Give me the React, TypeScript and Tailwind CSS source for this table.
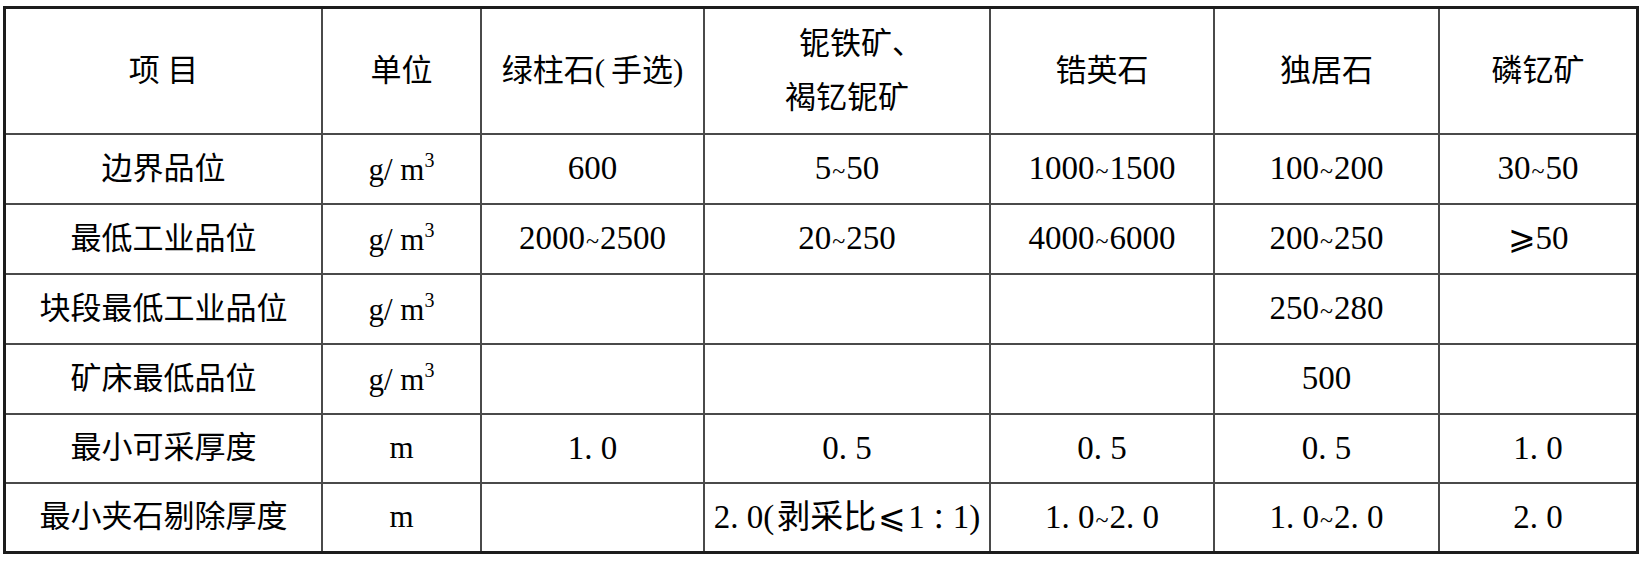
const rowLabels = [
  '边界品位',
  '最低工业品位',
  '块段最低工业品位',
  '矿床最低品位',
  '最小可采厚度',
  '最小夹石剔除厚度',
];

const units = ['g3', 'g3', 'g3', 'g3', 'm', 'm'];

const values: string[][] = [
  ['600', '5~50', '1000~1500', '100~200', '30~50'],
  ['2000~2500', '20~250', '4000~6000', '200~250', '⩾50'],
  ['', '', '', '250~280', ''],
  ['', '', '', '500', ''],
  ['1. 0', '0. 5', '0. 5', '0. 5', '1. 0'],
  ['', '', '1. 0~2. 0', '1. 0~2. 0', '2. 0'],
];

function Cell({ children, className = '' }: { children?: React.ReactNode; className?: string }) {
  return (
    <div className={`bg-white flex items-center justify-center text-center ${className}`}>
      {children}
    </div>
  );
}

// the tilde in the source is a small one, so draw it smaller than the digits
function Num({ text }: { text: string }) {
  const parts = text.split('~');
  return (
    <span className="whitespace-nowrap">
      {parts.map((p, i) => (
        <span key={i}>
          {i > 0 && <span className="text-[24px] mx-[1px]">~</span>}
          {p}
        </span>
      ))}
    </span>
  );
}

function Unit({ kind }: { kind: string }) {
  if (kind === 'm') return <span className="text-[31px]">m</span>;
  return (
    <span className="text-[31px] whitespace-nowrap">
      g/ m<span className="text-[20px] align-[13px]">3</span>
    </span>
  );
}

export default function App() {
  return (
    <div className="w-[1647px] h-[565px] bg-white pt-[6px] pl-[3px]">
      <div className="w-[1636px] h-[548px] border-[3px] border-[#1c1c1c] bg-[#4a4a4a] grid gap-[2px] grid-cols-[315px_157px_221px_284px_222px_223px_196px] grid-rows-[124px_68px_68px_68px_68px_67px_67px] text-black font-['Liberation_Serif','Noto_Sans_CJK_SC',serif]">
        {/* header */}
        <Cell className="text-[31px]">项 目</Cell>
        <Cell className="text-[31px]">单位</Cell>
        <Cell className="text-[31px] whitespace-nowrap">
          绿柱石(<span className="ml-[6px]">手选</span>)
        </Cell>
        <Cell className="text-[31px] leading-[54px]">
          <div>
            <div className="pl-[28px]">铌铁矿、</div>
            <div>褐钇铌矿</div>
          </div>
        </Cell>
        <Cell className="text-[31px]">锆英石</Cell>
        <Cell className="text-[31px]">独居石</Cell>
        <Cell className="text-[31px]">磷钇矿</Cell>

        {rowLabels.map((label, i) => (
          <>
            <Cell key={`l${i}`} className="text-[31px] whitespace-nowrap">{label}</Cell>
            <Cell key={`u${i}`}><Unit kind={units[i]} /></Cell>
            {values[i].map((v, j) =>
              i === 5 && j === 1 ? (
                <Cell key={`v${i}-${j}`} className="text-[33px] whitespace-nowrap">
                  2. 0(<span className="ml-[3px]">剥采比</span>
                  <span className="mx-[2px]">⩽</span>1
                  <span className="font-['Noto_Sans_CJK_TC',sans-serif] text-[28px]">：</span>1)
                </Cell>
              ) : (
                <Cell key={`v${i}-${j}`} className="text-[33px]">
                  <Num text={v} />
                </Cell>
              )
            )}
          </>
        ))}
      </div>
    </div>
  );
}
